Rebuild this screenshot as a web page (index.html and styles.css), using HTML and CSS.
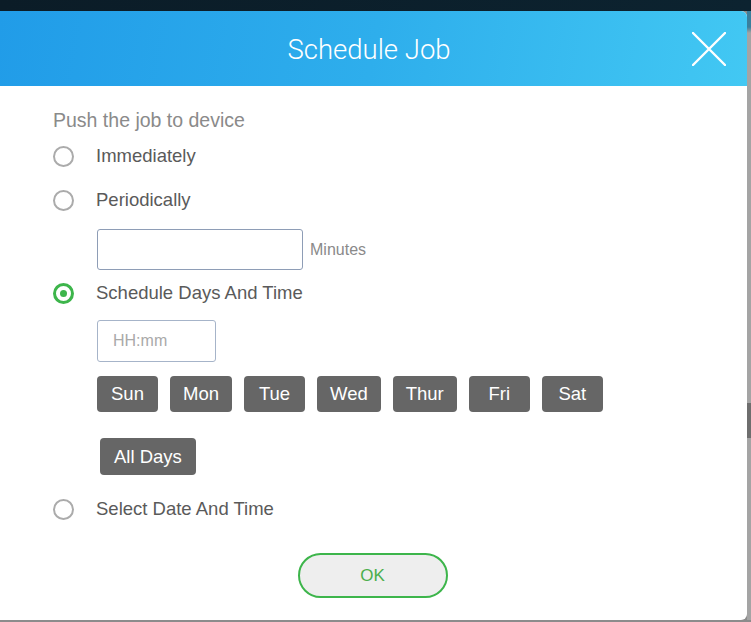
FILE: index.html
```html
<!DOCTYPE html>
<html>
<head>
<meta charset="utf-8">
<link rel="stylesheet" href="styles.css">
</head>
<body>
<div class="topbar"></div>
<div class="stage">
  <div class="modal">
    <div class="modal-header">
      <h1 class="title">Schedule Job</h1>
      <button class="close" aria-label="Close">
        <svg width="34" height="34" viewBox="0 0 34 34"><path d="M1 1 L33 33 M33 1 L1 33" stroke="#fff" stroke-width="2.4" stroke-linecap="round" fill="none"/></svg>
      </button>
    </div>
    <div class="modal-body">
      <div class="heading">Push the job to device</div>
      <label class="radio-row r-imm"><span class="radio"></span><span class="label">Immediately</span></label>
      <label class="radio-row r-per"><span class="radio"></span><span class="label">Periodically</span></label>
      <div class="minutes-row">
        <input class="text-input minutes" type="text">
        <span class="unit">Minutes</span>
      </div>
      <label class="radio-row r-sched"><span class="radio checked"></span><span class="label">Schedule Days And Time</span></label>
      <input class="text-input time" type="text" placeholder="HH:mm">
      <div class="days">
        <button class="day">Sun</button>
        <button class="day">Mon</button>
        <button class="day">Tue</button>
        <button class="day">Wed</button>
        <button class="day">Thur</button>
        <button class="day">Fri</button>
        <button class="day">Sat</button>
      </div>
      <button class="day all">All Days</button>
      <label class="radio-row r-date"><span class="radio"></span><span class="label">Select Date And Time</span></label>
      <div class="footer">
        <button class="ok">OK</button>
      </div>
    </div>
  </div>
  <div class="side"></div>
</div>
</body>
</html>
```

FILE: styles.css
```css
html, body {
  margin: 0;
  padding: 0;
}
body {
  width: 751px;
  height: 622px;
  overflow: hidden;
  background: #8c8c8c;
  font-family: "Liberation Sans", Arial, sans-serif;
}
.topbar {
  height: 11px;
  background: linear-gradient(to right, #0b1c27, #0c2330);
}
.stage {
  display: flex;
  height: 609px;
}
.modal {
  width: 747px;
  flex: none;
  background: #fff;
  border-radius: 0 6px 6px 0;
  overflow: hidden;
  display: flex;
  flex-direction: column;
}
.side {
  flex: 1;
  background: linear-gradient(to bottom, #3a7f9c 0, #3a7f9c 16px, #a4a4a4 22px, #a4a4a4 392px, #6e6e6e 392px, #6e6e6e 427px, #a4a4a4 427px, #a4a4a4 100%);
}
.modal-header {
  height: 75px;
  flex: none;
  background: linear-gradient(100deg, #219ce8 0%, #2eaeec 50%, #42c8f3 100%);
  display: flex;
  align-items: center;
  justify-content: center;
  position: relative;
}
.title {
  margin: 0;
  font-family: Roboto, "Liberation Sans", sans-serif;
  font-weight: 300;
  font-size: 27.5px;
  color: #fff;
  padding: 2px 9px 0 0;
}
.close {
  position: absolute;
  right: 21px;
  top: 21px;
  width: 34px;
  height: 34px;
  padding: 0;
  border: 0;
  background: transparent;
  display: flex;
}
.modal-body {
  padding: 22px 0 0 53px;
  display: flex;
  flex-direction: column;
  align-items: flex-start;
  flex: 1;
}
.heading {
  font-size: 19.5px;
  line-height: 24px;
  color: #8a8a8a;
}
.radio-row {
  display: flex;
  align-items: center;
  height: 24px;
  gap: 22px;
}
.r-imm { margin-top: 12px; }
.r-per { margin-top: 20px; }
.r-sched { margin-top: 11px; }
.r-date { margin-top: 22px; }
.radio {
  width: 21px;
  height: 21px;
  box-sizing: border-box;
  border: 2px solid #ababab;
  border-radius: 50%;
  flex: none;
  display: flex;
  align-items: center;
  justify-content: center;
}
.radio.checked {
  border: 3px solid #3db54b;
}
.radio.checked::after {
  content: "";
  width: 7px;
  height: 7px;
  border-radius: 50%;
  background: #3db54b;
}
.label {
  font-size: 18.5px;
  color: #5a5a5a;
  line-height: 24px;
}
.minutes-row {
  display: flex;
  align-items: center;
  margin: 17px 0 0 44px;
  gap: 7px;
}
.text-input {
  box-sizing: border-box;
  border: 1px solid #8e9db6;
  border-radius: 3px;
  background: #fff;
  font-family: "Liberation Sans", Arial, sans-serif;
  font-size: 16px;
  padding: 0 15px;
  outline: none;
}
.minutes {
  width: 206px;
  height: 41px;
}
.unit {
  font-size: 16px;
  color: #8a8a8a;
}
.time {
  width: 119px;
  height: 42px;
  margin: 15px 0 0 44px;
  border-color: #a6b4c9;
}
.time::placeholder {
  color: #a9a9a9;
}
.days {
  display: flex;
  gap: 12px;
  margin: 14px 0 0 44px;
}
.day {
  height: 36px;
  min-width: 61px;
  padding: 0 13px;
  border: 0;
  border-radius: 4px;
  background: #666;
  color: #fff;
  font-family: "Liberation Sans", Arial, sans-serif;
  font-size: 18.5px;
}
.all {
  height: 37px;
  margin: 26px 0 0 47px;
  padding: 0 14px;
}
.footer {
  align-self: stretch;
  display: flex;
  justify-content: center;
  margin: 32px 0 0 -53px;
}
.ok {
  width: 150px;
  height: 45px;
  box-sizing: border-box;
  border: 2px solid #3db54b;
  border-radius: 23px;
  background: #eeeeee;
  color: #4cae4c;
  font-family: "Liberation Sans", Arial, sans-serif;
  font-size: 17px;
  margin-left: -2px;
}
```
